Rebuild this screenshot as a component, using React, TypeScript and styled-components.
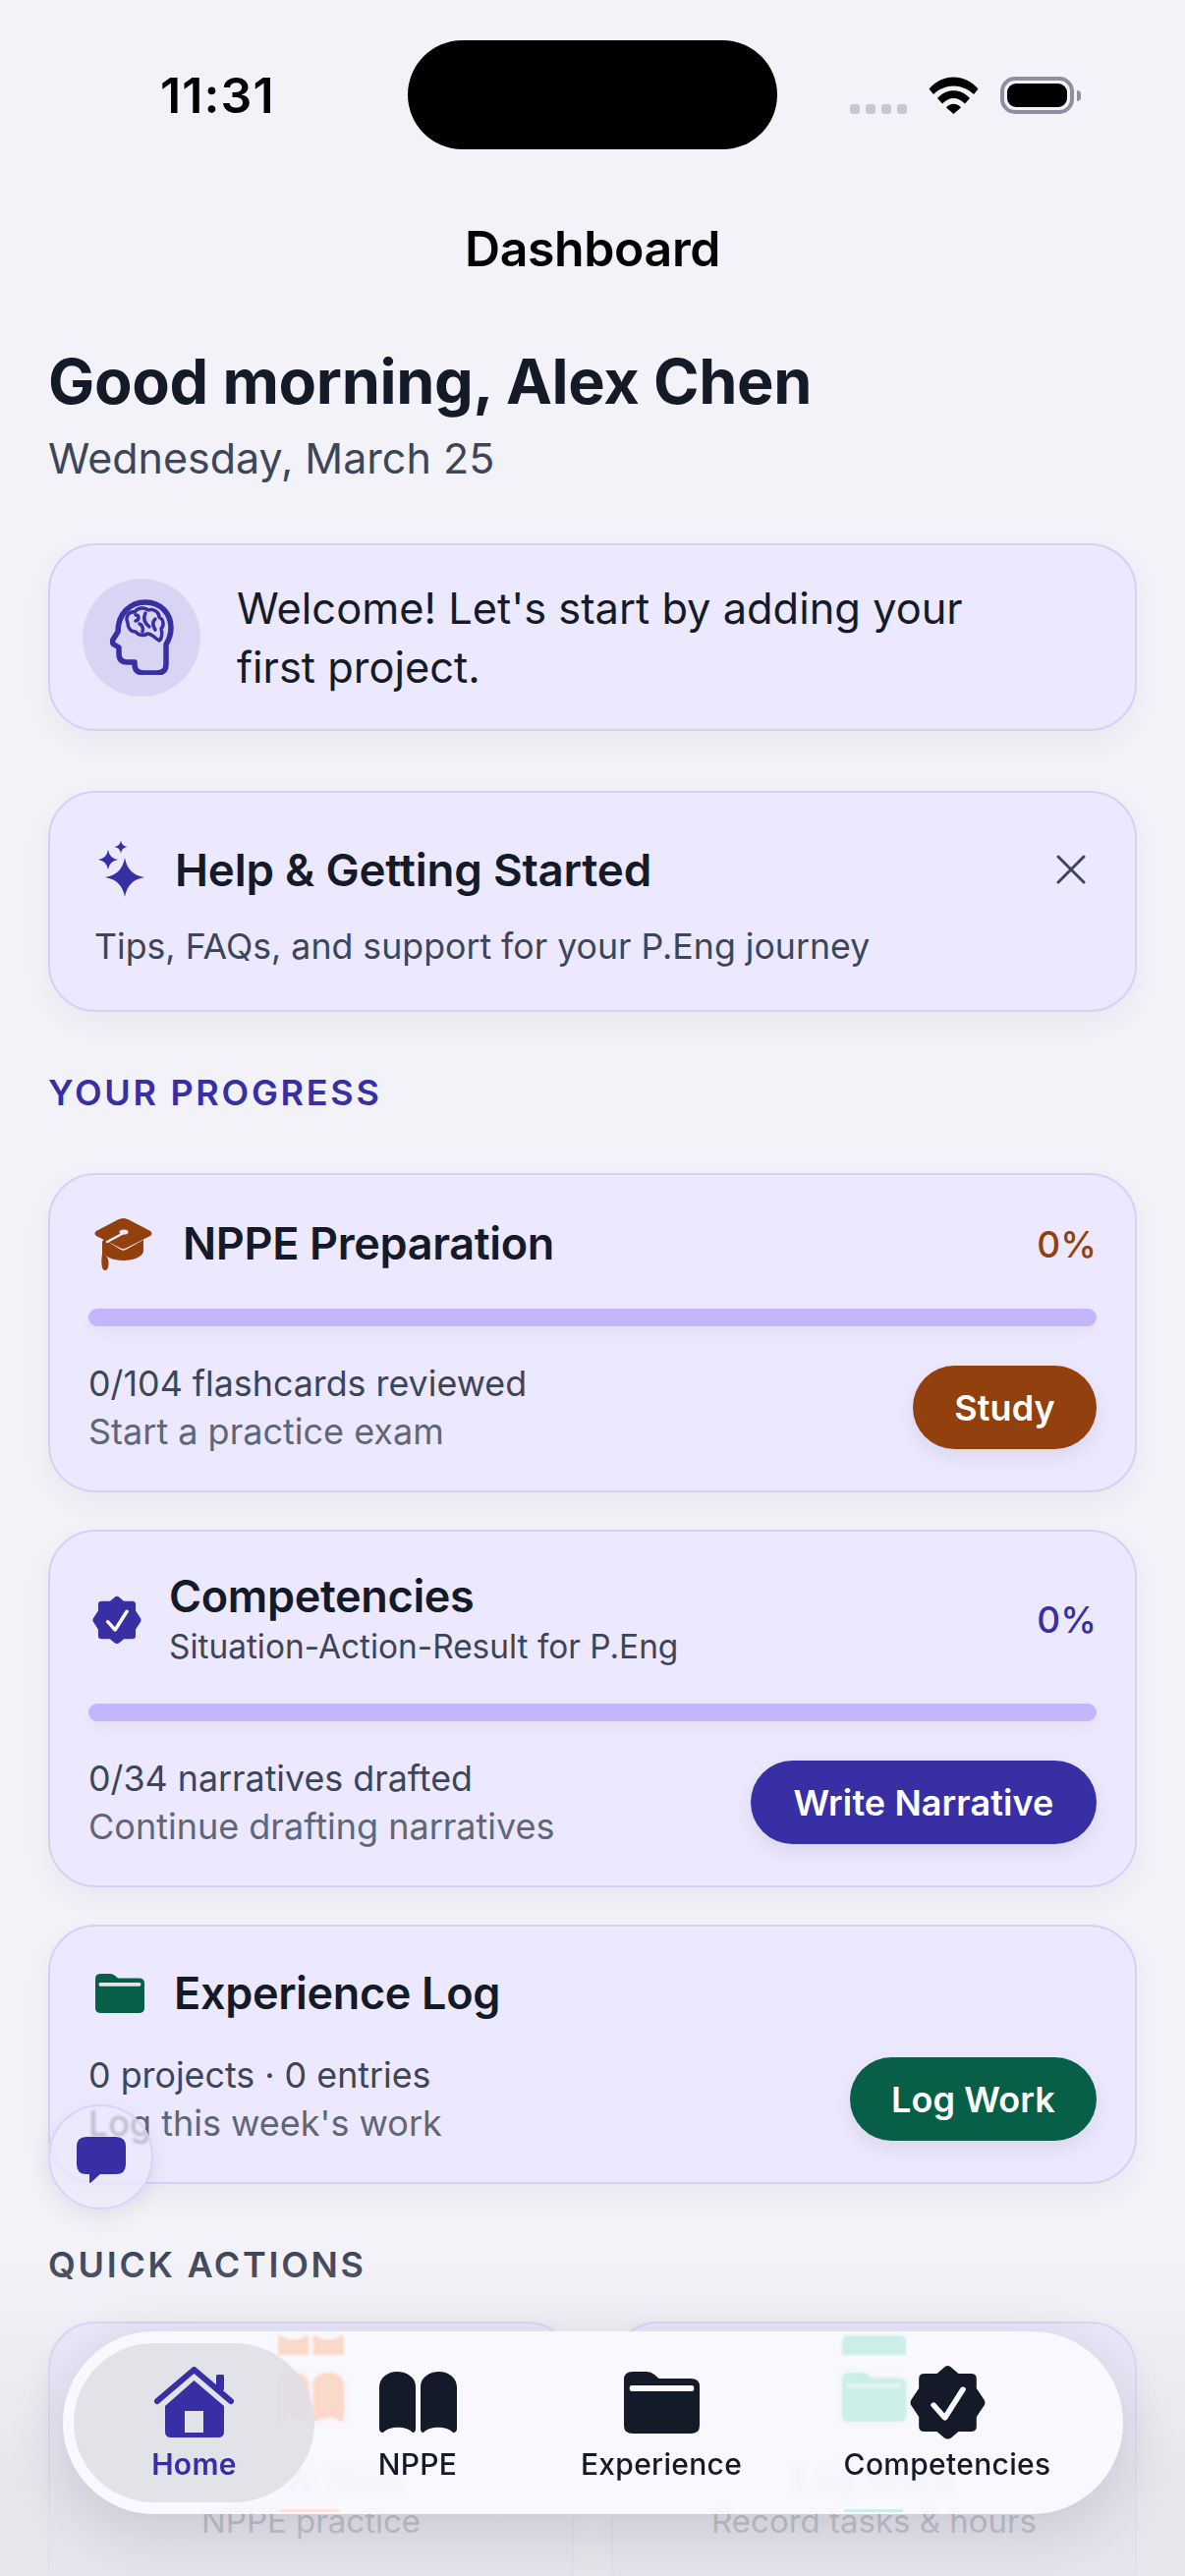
import React from "react";
import styled, { createGlobalStyle } from "styled-components";

const INDIGO = "#372fa3";
const INK = "#151a28";
const BROWN = "#92400e";
const GREEN = "#065f46";
const CARD = "#ece8fd";

const Global = createGlobalStyle`
  html, body { margin: 0; padding: 0; background: #f2f2f8; }
  * { box-sizing: border-box; }
  body { font-family: Inter, "Liberation Sans", sans-serif; }
`;

const Screen = styled.div`
  position: relative;
  width: 1206px;
  height: 2622px;
  overflow: hidden;
  background: #f2f2f8;
  color: ${INK};
`;

const StatusBar = styled.div`
  display: grid;
  grid-template-columns: 415px 376px 1fr;
  padding-top: 41px;
  height: 152px;
`;
const Clock = styled.div`
  padding-left: 163px;
  height: 111px;
  display: flex;
  align-items: center;
  font-size: 50px;
  font-weight: 600;
  color: #000;
  letter-spacing: 1.1px;
`;
const Island = styled.div`
  height: 111px;
  background: #000;
  border-radius: 56px;
`;
const StatusRight = styled.div`
  display: flex;
  align-items: flex-start;
  padding: 37px 0 0 74px;
`;
const Dots = styled.div`
  display: flex;
  gap: 6px;
  margin: 28px 22px 0 0;
`;
const Dot = styled.span`
  width: 10px;
  height: 10px;
  border-radius: 3px;
  background: #c7c7d1;
`;
const Battery = styled.div`
  position: relative;
  width: 75px;
  height: 38px;
  margin-left: 22px;
  padding: 3px;
  border: 4px solid #8e90a2;
  border-radius: 15px;
  &::after {
    content: "";
    position: absolute;
    right: -11px;
    top: 10px;
    width: 4px;
    height: 11px;
    border-radius: 0 4px 4px 0;
    background: #8e90a2;
  }
`;
const BatteryFill = styled.div`
  width: 100%;
  height: 100%;
  background: #000;
  border-radius: 9px;
`;

const NavTitle = styled.div`
  height: 62px;
  margin-top: 70px;
  line-height: 62px;
  text-align: center;
  font-size: 50px;
  font-weight: 600;
  letter-spacing: -0.4px;
  color: #000;
`;

const Content = styled.div`
  padding: 0 49px;
`;
const Greeting = styled.h1`
  margin: 69px 0 0;
  font-size: 63px;
  line-height: 70px;
  font-weight: 700;
  letter-spacing: -0.35px;
  color: ${INK};
`;
const DateLine = styled.div`
  margin-top: 16px;
  font-size: 43px;
  line-height: 54px;
  color: #3d4558;
`;

const Card = styled.section`
  background: ${CARD};
  border: 2px solid #d6cffa;
  border-radius: 48px;
  box-shadow: 0 10px 28px rgba(40, 40, 70, 0.05);
`;
const WelcomeCard = styled(Card)`
  margin-top: 60px;
  padding: 33.5px 34px 33.5px 33px;
  display: flex;
  align-items: center;
  gap: 37px;
`;
const IconDisc = styled.div`
  width: 120px;
  height: 120px;
  flex: none;
  border-radius: 50%;
  background: #d9d4f4;
  color: ${INDIGO};
  display: flex;
  align-items: center;
  justify-content: center;
`;
const WelcomeText = styled.p`
  margin: 0;
  width: 800px;
  font-size: 43.4px;
  line-height: 60px;
  color: ${INK};
`;
const HelpCard = styled(Card)`
  margin-top: 61px;
  padding: 46px 50px 41px 45px;
`;
const HelpHead = styled.div`
  display: flex;
  align-items: center;
  height: 64px;
  color: ${INDIGO};
`;
const HelpTitle = styled.h2`
  margin: 0 0 0 26px;
  flex: 1;
  font-size: 45.7px;
  font-weight: 600;
  letter-spacing: -0.2px;
  color: ${INK};
`;
const Close = styled.div`
  display: flex;
  color: #3d4558;
`;
const HelpSub = styled.p`
  margin: 22px 0 0;
  font-size: 35.7px;
  line-height: 48px;
  color: #3d4558;
`;

const SectionLabel = styled.h3<{ $color: string; $before: number; $after: number }>`
  margin: ${(p) => p.$before}px 0 ${(p) => p.$after}px;
  font-size: 36px;
  line-height: 40px;
  font-weight: 600;
  letter-spacing: 2.7px;
  color: ${(p) => p.$color};
`;

const Stack = styled.div`
  display: flex;
  flex-direction: column;
  gap: 38px;
`;
const ProgressCard = styled(Card)`
  padding: 38px 39px 42px 39px;
`;
const CardHead = styled.div<{ $h: number }>`
  display: flex;
  align-items: center;
  height: ${(p) => p.$h}px;
`;
const HeadIcon = styled.div<{ $w: number; $gap: number; $left: number; $color: string }>`
  display: flex;
  flex: none;
  width: ${(p) => p.$w}px;
  margin: 0 ${(p) => p.$gap}px 0 ${(p) => p.$left}px;
  color: ${(p) => p.$color};
`;
const TitleBlock = styled.div`
  flex: 1;
`;
const CardTitle = styled.h4`
  margin: 0;
  font-size: 45px;
  line-height: 56px;
  font-weight: 600;
  letter-spacing: -0.35px;
  color: ${INK};
`;
const CardSub = styled.div`
  font-size: 33.4px;
  line-height: 47px;
  color: #3d4558;
`;
const Percent = styled.div<{ $color: string }>`
  font-size: 37px;
  font-weight: 500;
  color: ${(p) => p.$color};
`;
const Track = styled.div`
  height: 18px;
  margin-top: 34px;
  border-radius: 9px;
  background: #c4b5fd;
  box-shadow: 0 6px 14px rgba(60, 50, 120, 0.05);
`;
const CardFoot = styled.div<{ $top: number }>`
  display: flex;
  align-items: center;
  justify-content: space-between;
  height: 85px;
  margin-top: ${(p) => p.$top}px;
`;
const Stat = styled.div`
  font-size: 35.8px;
  line-height: 49px;
  color: #3d4558;
`;
const Hint = styled.div`
  font-size: 36px;
  line-height: 49px;
  color: #5f6678;
`;
const ActionButton = styled.div<{ $bg: string; $w: number }>`
  width: ${(p) => p.$w}px;
  height: 85px;
  border-radius: 43px;
  background: ${(p) => p.$bg};
  color: #fff;
  font-size: 36px;
  font-weight: 600;
  letter-spacing: 0.1px;
  display: flex;
  align-items: center;
  justify-content: center;
  box-shadow: 0 8px 20px rgba(40, 40, 70, 0.09);
`;

const QuickGrid = styled.div`
  display: grid;
  grid-template-columns: 535px 535px;
  gap: 38px;
`;
const QuickCard = styled(Card)`
  padding: 50px 20px 70px;
  display: flex;
  flex-direction: column;
  align-items: center;
`;
const QuickIcon = styled.div<{ $color: string }>`
  display: flex;
  height: 50px;
  color: ${(p) => p.$color};
`;
const QuickTitle = styled.div`
  margin-top: 38px;
  font-size: 36px;
  line-height: 40px;
  font-weight: 600;
`;
const QuickSub = styled.div`
  font-size: 33px;
  line-height: 46px;
  color: #3d4558;
`;

const Fade = styled.div`
  position: absolute;
  left: 0;
  right: 0;
  bottom: 0;
  height: 330px;
  background: linear-gradient(to bottom, rgba(228, 228, 234, 0), rgba(226, 226, 232, 0.72) 70%, rgba(228, 228, 234, 0.85));
`;

const ChatBubble = styled.div`
  position: absolute;
  left: 49px;
  top: 2142px;
  width: 107px;
  height: 107px;
  border-radius: 50%;
  background: rgba(236, 233, 252, 0.6);
  backdrop-filter: blur(1.5px);
  border: 2px solid #d8d2fa;
  box-shadow: 0 8px 22px rgba(40, 40, 70, 0.08);
  color: ${INDIGO};
  display: flex;
  align-items: center;
  justify-content: center;
  padding-top: 6px;
`;

const TabBar = styled.nav`
  position: absolute;
  left: 64px;
  top: 2373px;
  width: 1079px;
  height: 186px;
  padding: 12px 0 0 11px;
  display: flex;
  align-items: flex-start;
  border-radius: 93px;
  background: rgba(250, 249, 255, 0.9);
  backdrop-filter: blur(4px);
  box-shadow: 0 18px 60px rgba(30, 30, 50, 0.14);
`;
const Ghost = styled.div<{ $x: number; $y: number; $w: number; $h: number; $color: string; $flip?: boolean }>`
  position: absolute;
  top: ${(p) => p.$y}px;
  left: ${(p) => p.$x}px;
  width: ${(p) => p.$w}px;
  height: ${(p) => p.$h}px;
  display: flex;
  align-items: ${(p) => (p.$flip ? "flex-end" : "flex-start")};
  overflow: hidden;
  filter: blur(1px);
  color: ${(p) => p.$color};
  transform: ${(p) => (p.$flip ? "scaleY(-1)" : "none")};
`;
const Glint = styled.div<{ $x: number; $w: number; $color: string }>`
  position: absolute;
  top: 181px;
  left: ${(p) => p.$x}px;
  width: ${(p) => p.$w}px;
  height: 3px;
  filter: blur(0.5px);
  background: ${(p) => p.$color};
`;
const Tab = styled.div<{ $w: number; $active?: boolean }>`
  position: relative;
  width: ${(p) => p.$w}px;
  height: 162px;
  padding-top: 21px;
  border-radius: 81px;
  background: ${(p) => (p.$active ? "rgba(222, 222, 230, 0.88)" : "transparent")};
  color: ${(p) => (p.$active ? INDIGO : INK)};
  display: flex;
  flex-direction: column;
  align-items: center;
`;
const TabIcon = styled.div`
  height: 78px;
  display: flex;
  align-items: center;
  justify-content: center;
`;
const TabLabel = styled.div<{ $active?: boolean }>`
  margin-top: 6px;
  font-size: 30px;
  line-height: 36px;
  font-weight: ${(p) => (p.$active ? 600 : 500)};
  letter-spacing: 0.3px;
`;

const Wifi = () => (
  <svg width="51" height="38" viewBox="0 0 51 38" fill="#000">
    <path d="M0.5 12.5C14-3.5 37-3.5 50.5 12.5L46 18C34 6.5 17 6.5 5 18Z" />
    <path d="M9 22C18 11.5 33 11.5 42 22L37 27.5C30 20 21 20 14 27.5Z" />
    <path d="M18 31.5C22 26.5 29 26.5 33 31.5L25.5 38Z" />
  </svg>
);

const BrainHead = () => (
  <svg width="65" height="77" viewBox="0 0 65 77" fill="none" stroke="currentColor" strokeLinecap="round" strokeLinejoin="round">
    <path strokeWidth="5.5" d="M57 46V66Q57 75 48 75H34Q25 75 25 66V64H17Q9 64 9 55V49L4 46Q1.5 44 3 41L8 33C8 15 20 3 36 3C52 3 62 15 62 29C62 36 60 41 57 46Z" />
    <path strokeWidth="3.5" d="M18 24C15 18 19 12 25 13C28 8 36 8 39 11C44 9 50 13 50 18C55 21 55 27 52 30C54 35 52 41 50 42C46 40 43 35 38 35C34 38 28 36 26 33C21 33 18 29 18 24Z" />
    <path strokeWidth="3.5" d="M26 16C30 16 30 21 26 22M36 14C33 20 35 24 40 28M46 20C42 24 44 28 46 31M30 25C33 26 34 30 33 33" />
  </svg>
);

const star = (x: number, y: number, r: number) => {
  const k = r * 0.14;
  return `M${x} ${y - r}Q${x + k} ${y - k} ${x + r} ${y}Q${x + k} ${y + k} ${x} ${y + r}Q${x - k} ${y + k} ${x - r} ${y}Q${x - k} ${y - k} ${x} ${y - r}Z`;
};

const Sparkles = () => (
  <svg width="56" height="66" viewBox="0 0 56 66" fill="currentColor">
    <path d={star(31, 41, 20)} />
    <path d={star(14, 23, 10)} />
    <path d={star(27, 10, 6.5)} />
  </svg>
);

const XMark = () => (
  <svg width="30" height="30" viewBox="0 0 30 30" fill="none" stroke="currentColor" strokeWidth="3" strokeLinecap="round">
    <path d="M2 2L28 28M28 2L2 28" />
  </svg>
);

const GradCap = () => (
  <svg width="59" height="53" viewBox="0 0 59 53" fill="currentColor">
    <path d="M29.5 0C32 0 34 1 36 2L57 13Q60 15.5 57 18L33 30Q29.5 32 26 30L2 18Q-1 15.5 2 13L23 2C25 1 27 0 29.5 0Z" />
    <path d="M9 21L27 32Q29.5 33.5 32 32L50 22V33C50 39 40 43 29.5 43C19 43 9 39 9 33Z" />
    <path d="M8 23L11 24.5V37Q15 41 14.5 47Q14 53 11 53Q8 53 7.5 47Q7 41 8 37Z" />
    <path d="M13 24L29 15.5" stroke={CARD} strokeWidth="2.5" fill="none" strokeLinecap="round" />
    <ellipse cx="30" cy="14" rx="4.5" ry="2.6" fill={CARD} />
  </svg>
);

const Seal = ({ w, h, check }: { w: number; h: number; check: string }) => (
  <svg width={w} height={h} viewBox="0 0 67 77" preserveAspectRatio="none" fill="currentColor">
    <path d="M33.5 1Q35.5 1 37 3L43 9H54Q59 9 59 14V24L66 36Q67 38.5 66 41L59 53V63Q59 68 54 68H43L37 74Q33.5 77 30 74L24 68H13Q8 68 8 63V53L1 41Q0 38.5 1 36L8 24V14Q8 9 13 9H24L30 3Q31.5 1 33.5 1Z" />
    <path d="M21 41L31 54L47 25" fill="none" stroke={check} strokeWidth="5" strokeLinecap="round" strokeLinejoin="round" />
  </svg>
);

const Folder = ({ w, h, band }: { w: number; h: number; band: string }) => (
  <svg width={w} height={h} viewBox="0 0 67 63" preserveAspectRatio="none" fill="currentColor">
    <path d="M8 0H20Q24 0 27 3L31 7H59Q67 7 67 15V55Q67 63 59 63H8Q0 63 0 55V8Q0 0 8 0Z" />
    <rect x="5" y="14" width="57" height="6" rx="2" fill={band} />
  </svg>
);

const Book = ({ w, h }: { w: number; h: number }) => (
  <svg width={w} height={h} viewBox="0 0 79 62" preserveAspectRatio="none" fill="currentColor">
    <path d="M0 16C0 6 9 0 18 0C28 0 37 6 37 15V58Q37 62 34 62C28 55 10 55 4 62Q0 62 0 58Z" />
    <path d="M79 16C79 6 70 0 61 0C51 0 42 6 42 15V58Q42 62 45 62C51 55 69 55 75 62Q79 62 79 58Z" />
  </svg>
);

const HomeIcon = () => (
  <svg width="81" height="72" viewBox="0 0 81 72" fill="currentColor">
    <path d="M3 35L40.500 3L78 35" fill="none" stroke="currentColor" strokeWidth="6" strokeLinecap="round" strokeLinejoin="round" />
    <rect x="63" y="8" width="8" height="16" rx="1.500" />
    <path fillRule="evenodd" d="M40.500 14L71 40V66Q71 72 65 72H17Q11 72 11 66V40ZM31 45V67H50V45Z" />
  </svg>
);

const ChatIcon = () => (
  <svg width="50" height="47" viewBox="0 0 50 47" fill="currentColor">
    <path d="M10 0H40Q50 0 50 10V28Q50 38 40 38H24L14 47Q13 47 13 46V38H10Q0 38 0 28V10Q0 0 10 0Z" />
  </svg>
);

export default function App() {
  return (
    <Screen>
      <Global />
      <StatusBar>
        <Clock>11:31</Clock>
        <Island />
        <StatusRight>
          <Dots>
            <Dot />
            <Dot />
            <Dot />
            <Dot />
          </Dots>
          <Wifi />
          <Battery>
            <BatteryFill />
          </Battery>
        </StatusRight>
      </StatusBar>
      <NavTitle>Dashboard</NavTitle>
      <Content>
        <Greeting>Good morning, Alex Chen</Greeting>
        <DateLine>Wednesday, March 25</DateLine>

        <WelcomeCard>
          <IconDisc>
            <BrainHead />
          </IconDisc>
          <WelcomeText>Welcome! Let's start by adding your first project.</WelcomeText>
        </WelcomeCard>

        <HelpCard>
          <HelpHead>
            <Sparkles />
            <HelpTitle>Help &amp; Getting Started</HelpTitle>
            <Close>
              <XMark />
            </Close>
          </HelpHead>
          <HelpSub>Tips, FAQs, and support for your P.Eng journey</HelpSub>
        </HelpCard>

        <SectionLabel $color={INDIGO} $before={62} $after={62}>
          YOUR PROGRESS
        </SectionLabel>

        <Stack>
          <ProgressCard>
            <CardHead $h={64}>
              <HeadIcon $w={59} $left={6} $gap={31} $color={BROWN}>
                <GradCap />
              </HeadIcon>
              <TitleBlock>
                <CardTitle>NPPE Preparation</CardTitle>
              </TitleBlock>
              <Percent $color={BROWN}>0%</Percent>
            </CardHead>
            <Track />
            <CardFoot $top={40}>
              <div>
                <Stat>0/104 flashcards reviewed</Stat>
                <Hint>Start a practice exam</Hint>
              </div>
              <ActionButton $bg={BROWN} $w={187}>
                Study
              </ActionButton>
            </CardFoot>
          </ProgressCard>

          <ProgressCard>
            <CardHead $h={103}>
              <HeadIcon $w={50} $left={4} $gap={28} $color={INDIGO}>
                <Seal w={50} h={50} check="#fff" />
              </HeadIcon>
              <TitleBlock>
                <CardTitle>Competencies</CardTitle>
                <CardSub>Situation-Action-Result for P.Eng</CardSub>
              </TitleBlock>
              <Percent $color={INDIGO}>0%</Percent>
            </CardHead>
            <Track />
            <CardFoot $top={40}>
              <div>
                <Stat>0/34 narratives drafted</Stat>
                <Hint>Continue drafting narratives</Hint>
              </div>
              <ActionButton $bg={INDIGO} $w={352}>
                Write Narrative
              </ActionButton>
            </CardFoot>
          </ProgressCard>

          <ProgressCard>
            <CardHead $h={60}>
              <HeadIcon $w={50} $left={7} $gap={30} $color={GREEN}>
                <Folder w={50} h={40} band="#e6e2f4" />
              </HeadIcon>
              <TitleBlock>
                <CardTitle>Experience Log</CardTitle>
              </TitleBlock>
            </CardHead>
            <CardFoot $top={35}>
              <div>
                <Stat>0 projects · 0 entries</Stat>
                <Hint>Log this week's work</Hint>
              </div>
              <ActionButton $bg={GREEN} $w={251}>
                Log Work
              </ActionButton>
            </CardFoot>
          </ProgressCard>
        </Stack>

        <SectionLabel $color="#3d4558" $before={62} $after={38}>
          QUICK ACTIONS
        </SectionLabel>

        <QuickGrid>
          <QuickCard>
            <QuickIcon $color="#ea580c">
              <Book w={67} h={50} />
            </QuickIcon>
            <QuickTitle>Study Now</QuickTitle>
            <QuickSub>NPPE practice</QuickSub>
          </QuickCard>
          <QuickCard>
            <QuickIcon $color="#10b981">
              <Folder w={65} h={50} band="#7ddfc0" />
            </QuickIcon>
            <QuickTitle>Log Work</QuickTitle>
            <QuickSub>Record tasks &amp; hours</QuickSub>
          </QuickCard>
        </QuickGrid>
      </Content>

      <Fade />

      <ChatBubble>
        <ChatIcon />
      </ChatBubble>

      <TabBar>
        <Ghost $x={219} $y={4} $w={67} $h={20} $color="#fbd9c9" $flip>
          <Book w={67} h={50} />
        </Ghost>
        <Ghost $x={219} $y={42} $w={67} $h={50} $color="#fbd9c9">
          <Book w={67} h={50} />
        </Ghost>
        <Ghost $x={793} $y={4} $w={65} $h={20} $color="#cbeee6" $flip>
          <Folder w={65} h={50} band="#cbeee6" />
        </Ghost>
        <Ghost $x={793} $y={42} $w={65} $h={50} $color="#cbeee6">
          <Folder w={65} h={50} band="#e3f6f1" />
        </Ghost>
        <Glint $x={221} $w={60} $color="#fbe3d7" />
        <Glint $x={795} $w={60} $color="#cbeee6" />
        <Tab $w={245} $active>
          <TabIcon>
            <HomeIcon />
          </TabIcon>
          <TabLabel $active>Home</TabLabel>
        </Tab>
        <Tab $w={210}>
          <TabIcon>
            <Book w={79} h={62} />
          </TabIcon>
          <TabLabel>NPPE</TabLabel>
        </Tab>
        <Tab $w={286}>
          <TabIcon>
            <Folder w={77} h={63} band="#faf9ff" />
          </TabIcon>
          <TabLabel>Experience</TabLabel>
        </Tab>
        <Tab $w={296}>
          <TabIcon>
            <Seal w={77} h={77} check="#faf9ff" />
          </TabIcon>
          <TabLabel>Competencies</TabLabel>
        </Tab>
      </TabBar>
    </Screen>
  );
}
